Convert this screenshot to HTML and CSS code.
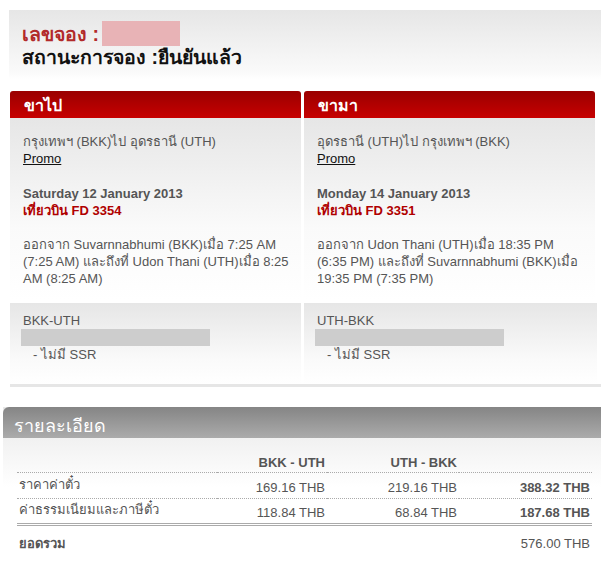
FILE: index.html
```html
<!DOCTYPE html>
<html lang="th">

<head>
  <meta charset="utf-8">
  <title>Booking</title>
  <link rel="stylesheet" href="styles.css">
</head>

<body>
  <div class="status">
    <p class="ref">เลขจอง :<span class="mask"></span></p>
    <p class="state">สถานะการจอง :ยืนยันแล้ว</p>
  </div>

  <div class="legs">
    <div class="leg">
      <h2>ขาไป</h2>
      <div class="leg-body wide">
        <p>กรุงเทพฯ (BKK)ไป อุดรธานี (UTH)</p>
        <a class="promo">Promo</a>
        <p class="date">Saturday 12 January 2013</p>
        <p class="flight">เที่ยวบิน FD 3354</p>
        <p class="times">ออกจาก Suvarnnabhumi (BKK)เมื่อ 7:25 AM (7:25 AM) และถึงที่ Udon Thani (UTH)เมื่อ 8:25 AM (8:25 AM)</p>
      </div>
    </div>
    <div class="leg">
      <h2>ขามา</h2>
      <div class="leg-body">
        <p>อุดรธานี (UTH)ไป กรุงเทพฯ (BKK)</p>
        <a class="promo">Promo</a>
        <p class="date">Monday 14 January 2013</p>
        <p class="flight">เที่ยวบิน FD 3351</p>
        <p class="times">ออกจาก Udon Thani (UTH)เมื่อ 18:35 PM (6:35 PM) และถึงที่ Suvarnnabhumi (BKK)เมื่อ 19:35 PM (7:35 PM)</p>
      </div>
    </div>
  </div>

  <div class="ssr">
    <div class="ssr-box">
      <p>BKK-UTH</p>
      <div class="mask-gray"></div>
      <p class="none">- ไม่มี SSR</p>
    </div>
    <div class="ssr-box">
      <p>UTH-BKK</p>
      <div class="mask-gray"></div>
      <p class="none">- ไม่มี SSR</p>
    </div>
  </div>

  <div class="details">
    <h2>รายละเอียด</h2>
    <table>
      <colgroup>
        <col class="c-label">
        <col class="c-out">
        <col class="c-back">
        <col>
      </colgroup>
      <tr class="head">
        <th></th>
        <th>BKK - UTH</th>
        <th>UTH - BKK</th>
        <th></th>
      </tr>
      <tr>
        <td class="label">ราคาค่าตั๋ว</td>
        <td>169.16 THB</td>
        <td>219.16 THB</td>
        <td class="sum">388.32 THB</td>
      </tr>
      <tr class="last">
        <td class="label">ค่าธรรมเนียมและภาษีตั๋ว</td>
        <td>118.84 THB</td>
        <td>68.84 THB</td>
        <td class="sum">187.68 THB</td>
      </tr>
      <tr class="total">
        <td class="label">ยอดรวม</td>
        <td></td>
        <td></td>
        <td>576.00 THB</td>
      </tr>
    </table>
  </div>
</body>

</html>
```

FILE: styles.css
```css
* {
  margin: 0;
  padding: 0;
  box-sizing: border-box;
}

body {
  font-family: "Liberation Sans", Arial, sans-serif;
  font-size: 13px;
  color: #555;
  background: #fff;
  width: 607px;
}

.status {
  margin: 10px 6px 0 9px;
  height: 69px;
  padding: 11px 13px;
  background: linear-gradient(#e6e6e6, #fafafa 90%, #fff);
  font-weight: bold;
  font-size: 19.5px;
  line-height: 22px;
}

.ref {
  color: #b22a2a;
  display: flex;
  align-items: center;
}

.ref .mask {
  display: inline-block;
  width: 78px;
  height: 25px;
  margin-left: 3px;
  background: #e8b3b6;
}

.state {
  color: #111;
}

.legs {
  display: grid;
  grid-template-columns: 291px 291px;
  gap: 3px;
  margin: 12px 0 0 10px;
}

.leg h2 {
  height: 27px;
  padding: 2px 14px 0;
  font-size: 16px;
  color: #fff;
  background: linear-gradient(#9a0000, #c70000);
  border-radius: 3px 3px 0 0;
}

.leg-body {
  height: 183px;
  padding: 15px 13px 0;
  background: linear-gradient(#e6e6e6, #fafafa 60%, #fff);
  line-height: 17px;
}

.leg-body.wide {
  padding-right: 4px;
}

.promo {
  color: #111;
  text-decoration: underline;
}

.date {
  margin-top: 18px;
  font-weight: bold;
}

.flight {
  font-weight: bold;
  color: #b00000;
}

.times {
  margin-top: 17px;
}

.ssr {
  display: grid;
  grid-template-columns: 291px 293px;
  gap: 3px;
  margin: 2px 6px 0 10px;
  border-bottom: 3px solid #e6e6e6;
}

.ssr-box {
  height: 81px;
  padding: 9px 13px 0;
  background: linear-gradient(#e6e6e6, #fafafa 70%, #fff);
  line-height: 17px;
}

.mask-gray {
  width: 189px;
  height: 17px;
  margin-left: -2px;
  background: #cdcdcd;
}

.none {
  padding-left: 10px;
}

.details {
  margin: 20px 6px 0 3px;
  background: linear-gradient(#e8e8e8, #fff 80px);
  height: 160px;
}

.details h2 {
  height: 31px;
  padding: 4px 11px 0;
  font-size: 18px;
  font-weight: normal;
  color: #fff;
  background: linear-gradient(#858585, #ababab);
  border-radius: 6px 0 0 0;
}

table {
  margin: 13px 0 0 14px;
  width: 575px;
  border-collapse: collapse;
  table-layout: fixed;
}

.c-label {
  width: 200px;
}

.c-out {
  width: 110px;
}

.c-back {
  width: 132px;
}

th,
td {
  text-align: right;
  vertical-align: bottom;
  height: 26px;
  padding: 0 2px 3px;
  border-bottom: 1px dotted #aaa;
}

th {
  height: 21px;
  padding-bottom: 2px;
  font-weight: bold;
}

td.label {
  text-align: left;
}

.sum {
  font-weight: bold;
}

tr.last td {
  height: 24px;
  border-bottom: 3px double #aaa;
}

tr.total td {
  border-bottom: none;
  vertical-align: middle;
  padding-bottom: 0;
  height: 37px;
  font-weight: bold;
}

tr.total td:last-child {
  font-weight: normal;
}
```
